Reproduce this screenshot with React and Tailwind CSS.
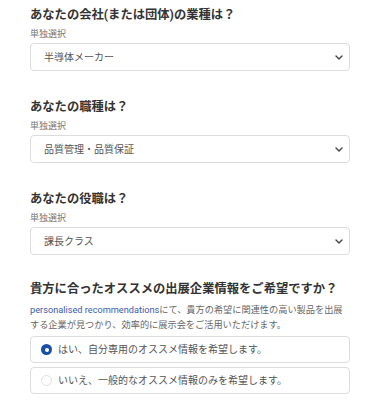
const questions = [
  { title: "あなたの会社(または団体)の業種は？", value: "半導体メーカー" },
  { title: "あなたの職種は？", value: "品質管理・品質保証" },
  { title: "あなたの役職は？", value: "課長クラス" },
];

const Chevron = () => (
  <svg width="8" height="5" viewBox="0 0 8 5" className="text-[#444]">
    <path d="M1 1l3 3 3-3" fill="none" stroke="currentColor" strokeWidth="1.4" strokeLinecap="round" strokeLinejoin="round" />
  </svg>
);

const SelectBox = ({ value }) => (
  <div className="mt-[2px] flex h-[28px] items-center justify-between rounded-[4px] border border-[#dcdcdc] bg-white pl-[13px] pr-[6px]">
    <span className="text-[10px] text-[#555]">{value}</span>
    <Chevron />
  </div>
);

const RadioOption = ({ checked, label }) => (
  <div className="flex h-[27px] items-center gap-[6px] rounded-[4px] border border-[#dcdcdc] bg-white pl-[10px]">
    {checked ? (
      <span className="flex h-[11px] w-[11px] items-center justify-center rounded-full bg-[#1a4fa8]">
        <span className="h-[4px] w-[4px] rounded-full bg-white"></span>
      </span>
    ) : (
      <span className="h-[11px] w-[11px] rounded-full border border-[#e0e0e0] bg-white"></span>
    )}
    <span className="text-[10px] text-[#555]">{label}</span>
  </div>
);

export default function App() {
  return (
    <div
      className="h-[411px] w-[375px] overflow-hidden bg-white pl-[30px] pt-[5px]"
      style={{ fontFamily: 'Roboto, "Noto Sans CJK JP", sans-serif' }}
    >
      <div className="w-[320px]">
        {questions.map((q) => (
          <div key={q.title} className="mb-[26px]">
            <h2 className="text-[12.3px] font-bold leading-[20px] text-[#333]">{q.title}</h2>
            <p className="mt-[2px] text-[9px] leading-[14px] text-[#777]">単独選択</p>
            <SelectBox value={q.value} />
          </div>
        ))}

        <div className="mt-[3px]">
          <h2 className="whitespace-nowrap text-[12.3px] font-bold leading-[17px] text-[#333]">
            貴方に合ったオススメの出展企業情報をご希望ですか？
          </h2>
          <p className="mt-[4px] text-[9.2px] leading-[15px] text-[#666]">
            <span className="text-[#3b5bb0]">personalised recommendations</span>
            にて、貴方の希望に関連性の高い製品を出展する企業が見つかり、効率的に展示会をご活用いただけます。
          </p>
          <div className="mt-[4px] flex flex-col gap-[4px]">
            <RadioOption checked label="はい、自分専用のオススメ情報を希望します。" />
            <RadioOption label="いいえ、一般的なオススメ情報のみを希望します。" />
          </div>
        </div>
      </div>
    </div>
  );
}
